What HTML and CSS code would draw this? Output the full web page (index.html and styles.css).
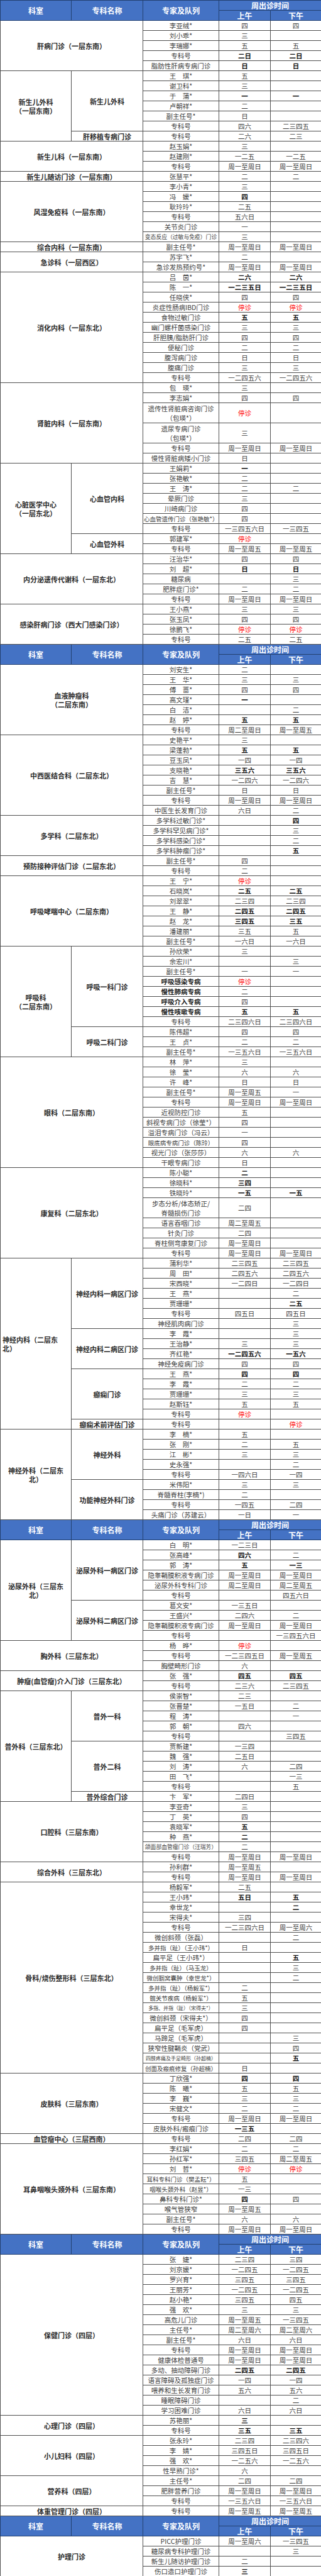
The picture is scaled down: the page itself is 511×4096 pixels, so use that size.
FILE: index.html
```html
<!DOCTYPE html>
<html lang="zh">
<head>
<meta charset="utf-8">
<title>出诊时间</title>
<link rel="stylesheet" href="styles.css">
</head>
<body>
<table class="t">
<colgroup><col class="c1"><col class="c2"><col class="c3"><col class="c4"><col class="c5"></colgroup>
<tbody>
<tr class="h"><th rowspan="2">科室</th><th rowspan="2">专科名称</th><th rowspan="2">专家及队列</th><th colspan="2">周出诊时间</th></tr>
<tr class="h"><th>上午</th><th>下午</th></tr>

<tr><td class="d" colspan="2" rowspan="5">肝病门诊（一层东南）</td><td>李亚绒*</td><td>四</td><td>四</td></tr>
<tr><td>刘小乖*</td><td>三</td><td></td></tr>
<tr><td>李瑞娜*</td><td>五</td><td>五</td></tr>
<tr><td>专科号</td><td class="b">二日</td><td class="b">二日</td></tr>
<tr><td>脂肪性肝病专病门诊</td><td class="b">日</td><td class="b">日</td></tr>

<tr><td class="d" rowspan="7">新生儿外科<br>（一层东南）</td><td class="d" rowspan="6">新生儿外科</td><td>王　琪*</td><td>五</td><td></td></tr>
<tr><td>谢卫科*</td><td>三</td><td></td></tr>
<tr><td>于　蒲*</td><td class="b">一</td><td class="b">一</td></tr>
<tr><td>卢朝祥*</td><td>二</td><td></td></tr>
<tr><td>副主任号*</td><td>日</td><td></td></tr>
<tr><td>专科号</td><td>四六</td><td>二三四五</td></tr>
<tr><td class="d">肝移植专病门诊</td><td>专科号</td><td>二六</td><td>二三</td></tr>

<tr><td class="d" colspan="2" rowspan="3">新生儿科（一层东南）</td><td>赵玉娟*</td><td>三</td><td></td></tr>
<tr><td>赵建刚*</td><td>一二五</td><td>一二五</td></tr>
<tr><td>专科号</td><td>周一至周日</td><td>周一至周日</td></tr>

<tr><td class="d" colspan="2">新生儿随访门诊（一层东南）</td><td>张慧平*</td><td>二</td><td>二</td></tr>

<tr><td class="d" colspan="2" rowspan="6">风湿免疫科（一层东南）</td><td>李小青*</td><td>三</td><td></td></tr>
<tr><td>冯　媛*</td><td class="b">四</td><td></td></tr>
<tr><td>耿玲玲*</td><td>二五</td><td></td></tr>
<tr><td>专科号</td><td>五六日</td><td></td></tr>
<tr><td>关节炎门诊</td><td>一</td><td></td></tr>
<tr><td class="s2">变态反应（过敏与免疫）门诊</td><td>三</td><td></td></tr>

<tr><td class="d" colspan="2">综合内科（一层东南）</td><td>副主任号*</td><td>周一至周日</td><td>周一至周日</td></tr>

<tr><td class="d" colspan="2" rowspan="2">急诊科（一层西区）</td><td>苏宇飞*</td><td>二</td><td></td></tr>
<tr><td>急诊发热预约号*</td><td>周一至周日</td><td>周一至周日</td></tr>

<tr><td class="d" colspan="2" rowspan="11">消化内科（一层东北）</td><td>吕　茵*</td><td class="b">二六</td><td class="b">二六</td></tr>
<tr><td>陈　一*</td><td class="b">一二三五日</td><td class="b">一二三五日</td></tr>
<tr><td>任晓侠*</td><td>四</td><td>四</td></tr>
<tr><td>炎症性肠病IBD门诊</td><td class="r">停诊</td><td class="r">停诊</td></tr>
<tr><td>食物过敏门诊</td><td class="b">五</td><td class="b">五</td></tr>
<tr><td>幽门螺杆菌感染门诊</td><td>三</td><td>三</td></tr>
<tr><td>肝胆胰/脂肪肝门诊</td><td>四</td><td>四</td></tr>
<tr><td>便秘门诊</td><td>二</td><td>二</td></tr>
<tr><td>腹泻病门诊</td><td>日</td><td>日</td></tr>
<tr><td>腹痛门诊</td><td>三</td><td>三</td></tr>
<tr><td>专科号</td><td>一二四五六</td><td>一二四五六</td></tr>

<tr><td class="d" colspan="2" rowspan="6">肾脏内科（一层东南）</td><td>包　瑛*</td><td>三</td><td></td></tr>
<tr><td>李志娟*</td><td>四</td><td>四</td></tr>
<tr class="tall"><td>遗传性肾脏病咨询门诊<br>（包瑛*）</td><td class="r">停诊</td><td></td></tr>
<tr class="tall"><td>遗尿专病门诊<br>（包瑛*）</td><td>三</td><td></td></tr>
<tr><td>专科号</td><td>周一至周日</td><td>周一至周日</td></tr>
<tr><td>慢性肾脏病矮小门诊</td><td>日</td><td></td></tr>

<tr><td class="d" rowspan="9">心脏医学中心<br>（一层东北）</td><td class="d" rowspan="7">心血管内科</td><td>王娟莉*</td><td class="b">一</td><td></td></tr>
<tr><td>张艳敏*</td><td>二</td><td></td></tr>
<tr><td>王　涛*</td><td>二</td><td>二</td></tr>
<tr><td>晕厥门诊</td><td>三</td><td></td></tr>
<tr><td>川崎病门诊</td><td>四</td><td></td></tr>
<tr><td class="s1">心血管遗传门诊（张艳敏*）</td><td>四</td><td></td></tr>
<tr><td>专科号</td><td>一三四五六日</td><td>一三四五</td></tr>
<tr><td class="d" rowspan="2">心血管外科</td><td>郭建军*</td><td class="r">停诊</td><td></td></tr>
<tr><td>专科号</td><td>周一至周五</td><td>周一至周五</td></tr>

<tr><td class="d" colspan="2" rowspan="5">内分泌遗传代谢科（一层东北）</td><td>汪治华*</td><td>四</td><td>四</td></tr>
<tr><td>刘　超*</td><td class="b">日</td><td class="b">日</td></tr>
<tr><td>糖尿病</td><td></td><td>三</td></tr>
<tr><td>肥胖症门诊*</td><td>二</td><td>二</td></tr>
<tr><td>专科号</td><td>周一至周日</td><td>周一至周日</td></tr>

<tr><td class="d" colspan="2" rowspan="4">感染肝病门诊（西大门感染门诊）</td><td>王小燕*</td><td>三</td><td>三</td></tr>
<tr><td>张玉凤*</td><td>四</td><td>四</td></tr>
<tr><td>徐鹏飞*</td><td class="r">停诊</td><td class="r">停诊</td></tr>
<tr><td>专科号</td><td>二五</td><td>二五</td></tr>

<tr class="h"><th rowspan="2">科室</th><th rowspan="2">专科名称</th><th rowspan="2">专家及队列</th><th colspan="2">周出诊时间</th></tr>
<tr class="h"><th>上午</th><th>下午</th></tr>

<tr><td class="d" colspan="2" rowspan="7">血液肿瘤科<br>（二层东南）</td><td>刘安生*</td><td>二</td><td></td></tr>
<tr><td>王　华*</td><td>三</td><td>三</td></tr>
<tr><td>傅　蔷*</td><td>四</td><td>四</td></tr>
<tr><td>高文瑾*</td><td class="b">一</td><td></td></tr>
<tr><td>白　洁*</td><td></td><td>二</td></tr>
<tr><td>赵　婷*</td><td class="b">五</td><td class="b">五</td></tr>
<tr><td>专科号</td><td>周二至周日</td><td>周一至周五</td></tr>

<tr><td class="d" colspan="2" rowspan="8">中西医结合科（二层东北）</td><td>史艳平*</td><td>三</td><td></td></tr>
<tr><td>梁蓬勃*</td><td class="b">五</td><td class="b">五</td></tr>
<tr><td>豆玉凤*</td><td>一四</td><td>一四</td></tr>
<tr><td>支晓艳*</td><td class="b">三五六</td><td class="b">三五六</td></tr>
<tr><td>吉　慧*</td><td>一二四六</td><td>一二四六</td></tr>
<tr><td>副主任号*</td><td>日</td><td>日</td></tr>
<tr><td>专科号</td><td>周一至周日</td><td>周一至周日</td></tr>
<tr><td>中医生长发育门诊</td><td>六日</td><td>二</td></tr>

<tr><td class="d" colspan="2" rowspan="4">多学科（二层东北）</td><td>多学科过敏门诊*</td><td></td><td class="b">四</td></tr>
<tr><td>多学科罕见病门诊*</td><td></td><td>三</td></tr>
<tr><td>多学科感染门诊*</td><td></td><td>二</td></tr>
<tr><td>多学科肿瘤门诊*</td><td></td><td class="b">五</td></tr>

<tr><td class="d" colspan="2" rowspan="2">预防接种评估门诊（二层东北）</td><td>副主任号*</td><td>四</td><td></td></tr>
<tr><td>专科号</td><td>二</td><td></td></tr>

<tr><td class="d" colspan="2" rowspan="7">呼吸哮喘中心（二层东南）</td><td>王　宁*</td><td class="r">停诊</td><td></td></tr>
<tr><td>石晓岚*</td><td class="b">二五</td><td class="b">二五</td></tr>
<tr><td>刘翠翠*</td><td>二三四</td><td>二三四</td></tr>
<tr><td>王　静*</td><td class="b">二四五</td><td class="b">二四五</td></tr>
<tr><td>赵　龙*</td><td class="b">三四五</td><td class="b">三五</td></tr>
<tr><td>潘建丽*</td><td>三五</td><td>五</td></tr>
<tr><td>副主任号*</td><td>一六日</td><td>一六日</td></tr>

<tr><td class="d" rowspan="11">呼吸科<br>（二层东南）</td><td class="d" rowspan="8">呼吸一科门诊</td><td>孙欣荣*</td><td>三</td><td></td></tr>
<tr><td>余宏川*</td><td></td><td>三</td></tr>
<tr><td>副主任号*</td><td>一</td><td>一</td></tr>
<tr><td class="x">呼吸感染专病</td><td class="r">停诊</td><td></td></tr>
<tr><td class="x">慢性肺病专病</td><td>二</td><td></td></tr>
<tr><td class="x">呼吸介入专病</td><td>四</td><td></td></tr>
<tr><td class="x">慢性咳嗽专病</td><td class="b">五</td><td class="b">五</td></tr>
<tr><td>专科号</td><td>二三四六日</td><td>二三四六日</td></tr>
<tr><td class="d" rowspan="3">呼吸二科门诊</td><td>陈伟超*</td><td>四</td><td>四</td></tr>
<tr><td>王　贞*</td><td>二</td><td>二</td></tr>
<tr><td>副主任号*</td><td>一三五六日</td><td>一三五六日</td></tr>

<tr><td class="d" colspan="2" rowspan="11">眼科（二层东南）</td><td>林　萍*</td><td>三</td><td></td></tr>
<tr><td>徐　莹*</td><td>六</td><td>六</td></tr>
<tr><td>许　峰*</td><td>日</td><td>日</td></tr>
<tr><td>副主任号*</td><td>周一至周五</td><td>一</td></tr>
<tr><td>专科号</td><td>周一至周日</td><td>周一至周日</td></tr>
<tr><td>近视防控门诊</td><td>五</td><td></td></tr>
<tr><td>斜视专病门诊（徐莹*）</td><td>四</td><td></td></tr>
<tr><td>溢泪专病门诊（冯云）</td><td>一</td><td></td></tr>
<tr><td class="s1">眼底病专病门诊（陈玲）</td><td>四</td><td></td></tr>
<tr><td>视光门诊（张莎莎）</td><td>六</td><td>六</td></tr>
<tr><td>干眼专病门诊</td><td>日</td><td></td></tr>

<tr><td class="d" colspan="2" rowspan="8">康复科（二层东北）</td><td>陈小聪*</td><td class="b">二</td><td></td></tr>
<tr><td>徐晓科*</td><td class="b">三四</td><td></td></tr>
<tr><td>铁晓玲*</td><td class="b">一五</td><td class="b">一五</td></tr>
<tr class="tall"><td>步态分析/体态矫正/<br>脊髓损伤门诊</td><td>二四</td><td></td></tr>
<tr><td>语言吞咽门诊</td><td>周二至周五</td><td></td></tr>
<tr><td>针灸门诊</td><td>二四</td><td></td></tr>
<tr><td>脊柱侧弯康复门诊</td><td>周一至周日</td><td></td></tr>
<tr><td>专科号</td><td>周一至周日</td><td>周一至周日</td></tr>

<tr><td class="d left" rowspan="17">神经内科（二层东<br>北）</td><td class="d" rowspan="7">神经内科一病区门诊</td><td>蒲利华*</td><td>二三四五</td><td>二三四五</td></tr>
<tr><td>周　田*</td><td>二四五六</td><td>二四五六</td></tr>
<tr><td>宋西晓*</td><td>一二四日</td><td>一二四日</td></tr>
<tr><td>王　燕*</td><td></td><td>二</td></tr>
<tr><td>贾珊珊*</td><td></td><td class="b">二五</td></tr>
<tr><td>专科号</td><td>四五日</td><td>四五日</td></tr>
<tr><td>神经肌肉病门诊</td><td></td><td>三</td></tr>
<tr><td class="d" rowspan="4">神经内科二病区门诊</td><td>李　霞*</td><td></td><td>三</td></tr>
<tr><td>王治静*</td><td>三</td><td>三</td></tr>
<tr><td>齐红艳*</td><td class="b">一二四五六</td><td class="b">一五六</td></tr>
<tr><td>神经免疫病门诊</td><td>四</td><td>四</td></tr>
<tr><td class="d" rowspan="5">癫痫门诊</td><td>王　燕*</td><td class="b">四</td><td class="b">四</td></tr>
<tr><td>李　霞*</td><td>二</td><td>二</td></tr>
<tr><td>贾珊珊*</td><td>三</td><td>三</td></tr>
<tr><td>赵斯钰*</td><td>五</td><td>五</td></tr>
<tr><td>专科号</td><td class="r">停诊</td><td></td></tr>
<tr><td class="d">癫痫术前评估门诊</td><td>专科号</td><td></td><td class="r">停诊</td></tr>

<tr><td class="d" rowspan="9">神经外科（二层东<br>北）</td><td class="d" rowspan="5">神经外科</td><td>李　楠*</td><td>五</td><td></td></tr>
<tr><td>张　刚*</td><td>二</td><td>五</td></tr>
<tr><td>江　彬*</td><td>三</td><td>三</td></tr>
<tr><td>史永强*</td><td></td><td>二</td></tr>
<tr><td>专科号</td><td>一四六日</td><td>一四</td></tr>
<tr><td class="d" rowspan="4">功能神经外科门诊</td><td>米伟阳*</td><td>三</td><td>三</td></tr>
<tr><td>脊髓脊柱(李楠*)</td><td>二</td><td></td></tr>
<tr><td>专科号</td><td>一四五</td><td>二四</td></tr>
<tr><td>头痛门诊（苏建云）</td><td>一日</td><td>一</td></tr>

<tr class="h"><th rowspan="2">科室</th><th rowspan="2">专科名称</th><th rowspan="2">专家及队列</th><th colspan="2">周出诊时间</th></tr>
<tr class="h"><th>上午</th><th>下午</th></tr>

<tr><td class="d" rowspan="10">泌尿外科（三层东<br>北）</td><td class="d" rowspan="6">泌尿外科一病区门诊</td><td>白　明*</td><td>一二三日</td><td></td></tr>
<tr><td>张高峰*</td><td class="b">四六</td><td>二</td></tr>
<tr><td>郭　涛*</td><td class="b">五</td><td class="b">一三</td></tr>
<tr><td>隐睾鞘膜积液专病门诊</td><td>周一至周日</td><td>周一至周日</td></tr>
<tr><td>泌尿外科专科门诊</td><td>周二至周日</td><td>周二至周五</td></tr>
<tr><td>专科号</td><td></td><td>四五六日</td></tr>
<tr><td class="d" rowspan="4">泌尿外科二病区门诊</td><td>葛文安*</td><td>一三五日</td><td></td></tr>
<tr><td>王盛兴*</td><td>二四六</td><td>二</td></tr>
<tr><td>隐睾鞘膜积液专病门诊</td><td>周一至周日</td><td>周一至周日</td></tr>
<tr><td>专科号</td><td></td><td>一三四五六日</td></tr>

<tr><td class="d" colspan="2" rowspan="3">胸外科（三层东北）</td><td>杨　晔*</td><td class="r">停诊</td><td></td></tr>
<tr><td>专科号</td><td>一二三四五日</td><td>周一至周五</td></tr>
<tr><td>胸壁畸形门诊</td><td>六</td><td></td></tr>

<tr><td class="d" colspan="2" rowspan="2">肿瘤(血管瘤)介入门诊（三层东北）</td><td>张　强*</td><td class="b">四五</td><td class="b">四五</td></tr>
<tr><td>专科号</td><td>二三六</td><td>二三四五</td></tr>

<tr><td class="d" rowspan="11">普外科（三层东北）</td><td class="d" rowspan="5">普外一科</td><td>侯崇智*</td><td>二三</td><td></td></tr>
<tr><td>张晋楚*</td><td>一五日</td><td>二</td></tr>
<tr><td>程　涛*</td><td></td><td>一</td></tr>
<tr><td>郭　朝*</td><td>四六</td><td></td></tr>
<tr><td>专科号</td><td></td><td>三四五</td></tr>
<tr><td class="d" rowspan="5">普外二科</td><td>贾新建*</td><td>一三四</td><td></td></tr>
<tr><td>魏　强*</td><td>二五日</td><td></td></tr>
<tr><td>刘　涛*</td><td>六</td><td>二四</td></tr>
<tr><td>田　飞*</td><td></td><td>一三</td></tr>
<tr><td>专科号</td><td></td><td>五</td></tr>
<tr><td class="d">普外综合门诊</td><td>卞　军*</td><td>二四日</td><td></td></tr>

<tr><td class="d" colspan="2" rowspan="6">口腔科（三层东南）</td><td>李亚奇*</td><td>三</td><td></td></tr>
<tr><td>丁　英*</td><td>四</td><td></td></tr>
<tr><td>袁晓军*</td><td class="b">五</td><td></td></tr>
<tr><td>种　燕*</td><td class="b">二</td><td></td></tr>
<tr><td class="s2">颌面部血管瘤门诊（汪瑞芳）</td><td>二</td><td></td></tr>
<tr><td>专科号</td><td>周一至周日</td><td>周一至周日</td></tr>

<tr><td class="d" colspan="2" rowspan="2">综合外科（三层东北）</td><td>孙利群*</td><td>周一至周五</td><td></td></tr>
<tr><td>专科号</td><td>周一至周日</td><td>周一至周日</td></tr>

<tr><td class="d" colspan="2" rowspan="19">骨科/烧伤整形科（三层东北）</td><td>杨毅军*</td><td>二五</td><td></td></tr>
<tr><td>王小玮*</td><td class="b">五日</td><td class="b">五</td></tr>
<tr><td>幸世龙*</td><td></td><td class="b">二</td></tr>
<tr><td>宋得夫*</td><td>三四</td><td></td></tr>
<tr><td>专科号</td><td>一二三四六日</td><td>周一至周六</td></tr>
<tr><td>微创斜颈（张磊）</td><td></td><td>二</td></tr>
<tr><td class="s1">多并指（趾）（王小玮*）</td><td>日</td><td></td></tr>
<tr><td>扁平足（王小玮*）</td><td></td><td class="b">五</td></tr>
<tr><td class="s1">多并指（趾）（马玉龙）</td><td></td><td>三</td></tr>
<tr><td class="s1">微创腘窝囊肿（幸世龙*）</td><td></td><td>二</td></tr>
<tr><td class="s1">多并指（趾）（杨毅军*）</td><td>二</td><td></td></tr>
<tr><td class="s1">髋关节疾病（杨毅军*）</td><td>五</td><td></td></tr>
<tr><td class="s3">多指、并指（趾）（宋得夫*）</td><td>三</td><td></td></tr>
<tr><td>微创斜颈（宋得夫*）</td><td>四</td><td></td></tr>
<tr><td>扁平足（毛军虎）</td><td>四</td><td></td></tr>
<tr><td>马蹄足（毛军虎）</td><td></td><td>三</td></tr>
<tr><td>狭窄性腱鞘炎（党武）</td><td></td><td>四</td></tr>
<tr><td class="s3">四肢疼痛及手足畸形（孙超楠）</td><td></td><td class="b">五</td></tr>
<tr><td class="s1">创面及瘢痕修复（孙超楠）</td><td>日</td><td></td></tr>

<tr><td class="d" colspan="2" rowspan="6">皮肤科（三层东南）</td><td>丁欣强*</td><td class="b">四</td><td class="b">四</td></tr>
<tr><td>陈　曦*</td><td>五</td><td>五</td></tr>
<tr><td>李　巍*</td><td>三</td><td>三</td></tr>
<tr><td>宋健文*</td><td>二</td><td>二</td></tr>
<tr><td>专科号</td><td>周一至周日</td><td>周一至周日</td></tr>
<tr><td>皮肤外科/瘢痕门诊</td><td class="b">一三五</td><td></td></tr>

<tr><td class="d" colspan="2">血管瘤中心（三层西南）</td><td>专科号</td><td>二四</td><td>二四</td></tr>

<tr><td class="d" colspan="2" rowspan="9">耳鼻咽喉头颈外科（三层东南）</td><td>李红娟*</td><td>二</td><td>二</td></tr>
<tr><td>孙红军*</td><td>三四五</td><td>周二至周五</td></tr>
<tr><td>刘　哲*</td><td class="r">停诊</td><td class="r">停诊</td></tr>
<tr><td class="s1">耳科专科门诊（樊孟耘*）</td><td>五</td><td></td></tr>
<tr><td class="s1">咽喉头颈外科（赵昱*）</td><td>一三</td><td></td></tr>
<tr><td>鼻科专科门诊*</td><td class="b">四</td><td>四</td></tr>
<tr><td>喉气管狭窄</td><td>周一至周五</td><td></td></tr>
<tr><td>副主任号*</td><td>六</td><td>六</td></tr>
<tr><td>专科号</td><td>周一至周日</td><td>周一至周日</td></tr>

<tr class="h"><th rowspan="2">科室</th><th rowspan="2">专科名称</th><th rowspan="2">专家及队列</th><th colspan="2">周出诊时间</th></tr>
<tr class="h"><th>上午</th><th>下午</th></tr>

<tr><td class="d" colspan="2" rowspan="16">保健门诊（四层）</td><td>张　婕*</td><td>二三四</td><td>三四</td></tr>
<tr><td>刘京媛*</td><td>一二四五</td><td>一二四五</td></tr>
<tr><td>罗兴育*</td><td>三四五</td><td>三四五</td></tr>
<tr><td>王丽芳*</td><td>一二四五</td><td>一二四五</td></tr>
<tr><td>赵小艳*</td><td>三四五</td><td>四五</td></tr>
<tr><td>强　欢*</td><td>三</td><td>三</td></tr>
<tr><td>高危儿门诊</td><td>周一至周五</td><td>一三四五</td></tr>
<tr><td>主任号*</td><td>周二至周六</td><td>周二至周六</td></tr>
<tr><td>副主任号*</td><td>六日</td><td>六日</td></tr>
<tr><td>专科号</td><td>周一至周日</td><td>周一至周日</td></tr>
<tr><td>健康体检普通号</td><td>周一至周日</td><td>周一至周日</td></tr>
<tr><td>多动、抽动障碍门诊</td><td class="b">二四五</td><td class="b">二四五</td></tr>
<tr><td>语言障碍及孤独症门诊</td><td>一四</td><td>一四</td></tr>
<tr><td>喂养和生长发育门诊</td><td>五六</td><td>五六</td></tr>
<tr><td>睡眠障碍门诊</td><td></td><td>二</td></tr>
<tr><td>学习困难门诊</td><td>六日</td><td>六日</td></tr>

<tr><td class="d" colspan="2" rowspan="2">心理门诊（四层）</td><td>苏艳丽*</td><td class="b">三</td><td></td></tr>
<tr><td>专科号</td><td class="b">三五</td><td class="b">三五</td></tr>

<tr><td class="d" colspan="2" rowspan="4">小儿妇科（四层）</td><td>张永玲*</td><td>二三四</td><td>二三四六</td></tr>
<tr><td>李　婧*</td><td>三四五日</td><td>三四五日</td></tr>
<tr><td>强　欢*</td><td>一二五六</td><td>一二五六</td></tr>
<tr><td>性早熟门诊*</td><td>六</td><td></td></tr>

<tr><td class="d" colspan="2" rowspan="3">营养科（四层）</td><td>主任号*</td><td>二四</td><td>二四</td></tr>
<tr><td>肥胖营养门诊</td><td>周一至周日</td><td>周一至周日</td></tr>
<tr><td>专科号</td><td>一三五六日</td><td>一三五六日</td></tr>

<tr><td class="d" colspan="2">体重管理门诊（四层）</td><td>专科号</td><td>周一至周五</td><td>周一至周五</td></tr>

<tr class="h"><th rowspan="2">科室</th><th rowspan="2">专科名称</th><th rowspan="2">专家及队列</th><th colspan="2">周出诊时间</th></tr>
<tr class="h"><th>上午</th><th>下午</th></tr>

<tr><td class="d" colspan="2" rowspan="4">护理门诊</td><td>PICC护理门诊</td><td>周一至周六</td><td>一三四五</td></tr>
<tr><td>糖尿病专科护理门诊</td><td></td><td>三</td></tr>
<tr><td>新生儿随访护理门诊</td><td>二</td><td></td></tr>
<tr><td>伤口造口护理门诊</td><td class="b">三</td><td></td></tr>
</tbody>
</table>
</body>
</html>
```

FILE: styles.css
```css
* { box-sizing: border-box; }
html, body { margin: 0; padding: 0; background: #ffffff; }
body { width: 511px; font-family: "Noto Sans CJK SC", "Liberation Sans", sans-serif; }

.t {
  width: 511px;
  border-collapse: collapse;
  table-layout: fixed;
  font-size: 10.5px;
  color: #3c3c3c;
}
.c1 { width: 113px; }
.c2 { width: 114px; }
.c3 { width: 121px; }
.c4 { width: 82px; }
.c5 { width: 81px; }

.t td, .t th {
  border: 1px solid #505050;
  padding: 0 1px;
  text-align: center;
  vertical-align: middle;
  line-height: 14px;
  white-space: nowrap;
  overflow: hidden;
}
.t tr { height: 16px; }
.t tr.tall { height: 32px; }
.t tr.tall td { line-height: 15px; }

.t th {
  background: #4472c4;
  color: #ffffff;
  font-weight: bold;
  font-size: 12px;
  border-color: #22406f;
}

.d { font-weight: bold; font-size: 11px; color: #2a2a2a; line-height: 15px; }
.left { text-align: left !important; padding-left: 3px !important; }
.b { font-weight: bold; color: #111111; }
.r { color: #ff0000; }
.x { font-weight: bold; color: #1c1c1c; }
.s1 { font-size: 9.5px; }
.s2 { font-size: 8.8px; }
.s3 { font-size: 8px; }
```
